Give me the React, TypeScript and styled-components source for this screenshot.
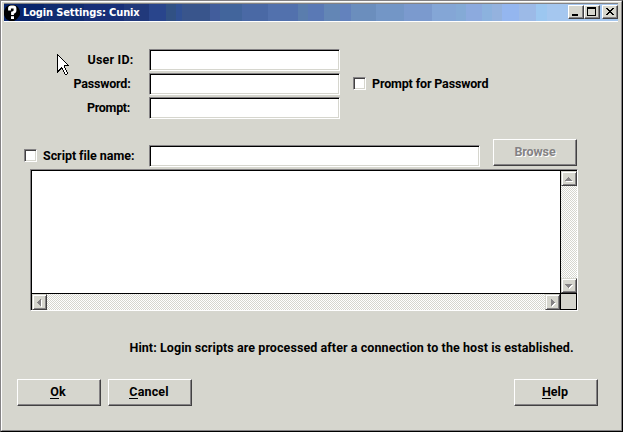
import React from 'react';
import styled, { createGlobalStyle } from 'styled-components';

const FACE = '#d6d6ce';
const SHADE = '#848284';
const DARK = '#424142';

const GlobalStyle = createGlobalStyle`
  * { box-sizing: border-box; }
  body { margin: 0; overflow: hidden; background: ${FACE}; }
`;

const Frame = styled.main`
  width: 623px;
  height: 432px;
  background: ${FACE};
  border: 1px solid ${SHADE};
  border-right-color: #000;
  border-bottom-color: #000;
  font: bold 12.5px/16px Roboto, 'Liberation Sans', sans-serif;
  color: #000;
`;

const Inner = styled.div`
  width: 621px;
  height: 430px;
  border: 1px solid #fff;
  border-right-color: ${SHADE};
  border-bottom-color: ${SHADE};
  padding: 1px 2px;
  display: flex;
  flex-direction: column;
`;

const TitleBar = styled.header`
  height: 19px;
  flex: none;
  display: flex;
  align-items: center;
  margin-right: 1px;
  border-top: 1px solid ${SHADE};
  border-bottom: 1px solid #fff;
  background: linear-gradient(
    90deg,
    #08246b 0 40px, #102c70 40px 80px, #182f78 80px 120px, #21397b 120px 145px,
    #29458c 145px 162px, #315184 162px 172px, #315194 172px 178px, #39558c 178px 206px,
    #425d9c 206px 216px, #42659c 216px 238px, #4a69a5 238px 264px, #5271ad 264px 294px,
    #5a7dad 294px 304px, #5a79b5 304px 320px, #6386b5 320px 336px, #6382bd 336px 347px,
    #6b8ebd 347px 372px, #7396c6 372px 400px, #7b9ace 400px 428px, #84a6d6 428px 452px,
    #84aad6 452px 462px, #8caade 462px 478px, #8cb2de 478px 488px, #94b2de 488px 498px,
    #94b6ef 498px 515px, #9cbae7 515px 532px, #9cc7f0 532px 543px, #a5c7ef 543px
  );
`;

const Title = styled.h1`
  flex: 1;
  margin: 0 0 0 3px;
  color: #fff;
  font: bold 11px/16px 'DejaVu Sans Condensed', 'DejaVu Sans', sans-serif;
  letter-spacing: -0.13px;
`;

const CaptionButton = styled.button<{ $gap?: number }>`
  width: 16px;
  height: 14px;
  padding: 0;
  margin-left: ${p => p.$gap ?? 0}px;
  margin-top: -1px;
  background: ${FACE};
  border: 1px solid #fff;
  border-right-color: ${DARK};
  border-bottom-color: ${DARK};
  box-shadow: inset -1px -1px ${SHADE};
  svg { display: block; }
`;

const Client = styled.form`
  flex: 1;
  display: flex;
  flex-direction: column;
`;

const Credentials = styled.section`
  display: flex;
  height: 70px;
  margin-top: 27px;
`;

const PointerArea = styled.div`
  width: 70px;
  padding: 5px 0 0 53px;
  svg { display: block; }
`;

const FieldList = styled.div`
  display: grid;
  grid-template-columns: 75px 191px;
  grid-auto-rows: 22px;
  row-gap: 2px;
  align-items: center;
`;

const Label = styled.label<{ $shift?: number; $track?: number }>`
  white-space: nowrap;
  margin-left: ${p => p.$shift ?? 0}px;
  letter-spacing: ${p => p.$track ?? 0}px;
`;

const Field = styled.input<{ $width: number }>`
  display: block;
  width: ${p => p.$width}px;
  height: 22px;
  padding: 0 3px;
  font: inherit;
  outline: 0;
  border: 1px solid ${SHADE};
  border-right-color: #fff;
  border-bottom-color: #fff;
  box-shadow: inset 1px 1px #000, inset -1px -1px ${FACE};
  background: #fff;
`;

const Check = styled.input.attrs({ type: 'checkbox' })`
  appearance: none;
  flex: none;
  width: 13px;
  height: 13px;
  margin: 0;
  background: #fff;
  border: 1px solid ${SHADE};
  border-right-color: #fff;
  border-bottom-color: #fff;
  box-shadow: inset 1px 1px ${DARK}, inset -1px -1px ${FACE};
`;

const CheckOption = styled.div`
  display: flex;
  align-items: flex-start;
  height: 22px;
  margin: 24px 0 0 13px;
  ${Check} { margin-top: 4px; }
  ${Label} { margin-top: 3px; }
`;

const ScriptRow = styled.section`
  display: flex;
  align-items: flex-start;
  height: 28px;
  margin: 20px 0 2px 20px;
  ${Check} { margin-top: 10px; }
`;

const ScriptLabel = styled(Label)`
  width: 106px;
  margin-top: 9px;
`;

const ScriptField = styled(Field)`
  margin-top: 6px;
`;

const Button = styled.button<{ $gap?: number; $track?: number }>`
  width: 84px;
  height: 27px;
  flex: none;
  margin-left: ${p => p.$gap ?? 0}px;
  padding: 0 2px 2px 0;
  font: inherit;
  letter-spacing: ${p => p.$track ?? 0}px;
  color: #000;
  background: ${FACE};
  border: 1px solid #fff;
  border-right-color: ${DARK};
  border-bottom-color: ${DARK};
  box-shadow: inset -1px -1px ${SHADE};
  &:disabled { color: ${SHADE}; text-shadow: 1px 1px #fff; padding-right: 0; }
`;

const AccessKey = styled.span`
  border-bottom: 1px solid #000;
  display: inline-block;
  line-height: 13px;
`;

const Editor = styled.section`
  display: grid;
  grid-template-columns: 529px 16px;
  grid-template-rows: 123px 16px;
  width: 548px;
  height: 142px;
  margin-left: 26px;
  border: 1px solid ${SHADE};
  border-right-color: #fff;
  border-bottom-color: #fff;
  padding: 1px 0 0 1px;
  background: linear-gradient(#000, #000) 0 0 / 100% 1px no-repeat,
    linear-gradient(#000, #000) 0 0 / 1px 100% no-repeat, ${FACE};
`;

const Script = styled.textarea`
  width: 529px;
  height: 123px;
  display: block;
  margin: 0;
  padding: 2px;
  resize: none;
  border: 0;
  border-right: 1px solid #000;
  border-bottom: 1px solid #000;
  outline: 0;
  overflow: hidden;
  background: #fff;
`;

const Track = styled.div<{ $vertical?: boolean }>`
  display: flex;
  flex-direction: ${p => (p.$vertical ? 'column' : 'row')};
  justify-content: space-between;
  border-${p => (p.$vertical ? 'bottom' : 'right')}: 1px solid #000;
  background: repeating-conic-gradient(#fff 0 25%, ${FACE} 0 50%) 0 0 / 2px 2px;
`;

const Arrow = styled.button<{ $vertical?: boolean }>`
  width: ${p => (p.$vertical ? 16 : 15)}px;
  height: ${p => (p.$vertical ? 15 : 16)}px;
  flex: none;
  padding: 0;
  background: ${FACE};
  border: 1px solid ${FACE};
  border-right-color: ${DARK};
  border-bottom-color: ${DARK};
  box-shadow: inset 1px 1px #fff, inset -1px -1px ${SHADE};
  svg { display: block; }
`;

const Corner = styled.div`
  border-right: 1px solid #000;
  border-bottom: 1px solid #000;
`;

const Hint = styled.p`
  margin: 29px 0 0 125.5px;
  white-space: nowrap;
  letter-spacing: 0.075px;
`;

const Actions = styled.footer`
  display: flex;
  margin: 23px 21px 0 13px;
`;

const HelpButton = styled(Button)`
  margin-left: auto;
`;

const ARROWS = {
  up: 'M6 5h1v1h1v1h1v1h1v1H3V8h1V7h1V6h1z',
  down: 'M3 5h7v1H9v1H8v1H7v1H6V8H5V7H4V6H3z',
  left: 'M8 3v7H7V9H6V8H5V7H4V6h1V5h1V4h1V3z',
  right: 'M5 3v7h1V9h1V8h1V7h1V6H8V5H7V4H6V3z',
};

function ScrollArrow({ dir }: { dir: keyof typeof ARROWS }) {
  const vertical = dir === 'up' || dir === 'down';
  return (
    <Arrow type="button" aria-label={`Scroll ${dir}`} $vertical={vertical}>
      <svg width="13" height="13" shapeRendering="crispEdges">
        <path d={ARROWS[dir]} fill="#fff" transform="translate(1 1)" />
        <path d={ARROWS[dir]} fill={SHADE} />
      </svg>
    </Arrow>
  );
}

function HelpIcon() {
  return (
    <svg width="16" height="16" viewBox="0 0 16 16">
      <path d="M5 0h6l3 2 2 4v4l-3 4-3 2H6l-4-2-2-4V6l2-4z" fill="#000" />
      <path d="M5.5 5.5V3.2Q5.5 2 7 2h2.3Q11 2 11 3.5v2Q11 7 8.5 7.8V10" fill="none" stroke="#fff" strokeWidth="2.8" />
      <path d="M7 11.2h3V14H7z" fill="#fff" />
    </svg>
  );
}

function Pointer() {
  return (
    <svg width="13" height="21" viewBox="0 0 13 21" shapeRendering="crispEdges">
      <path
        d="M0 0h1v1h1v1h1v1h1v1h1v1h1v1h1v1h1v1h1v1h1v1h1v1h1v1H8v2h1v2h1v2h1v2h-1v1H8v-1H7v-2H6v-2H5v-1H4v1H3v1H2v1H1v1H0z"
        fill="#000"
      />
      <path
        d="M1 2h1v1h1v1h1v1h1v1h1v1h1v1h1v1h1v1h1v1H7v3h1v2h1v2h1v2H8v-2H7v-2H6v-2H5v-1H4v1H3v1H2v1H1z"
        fill="#fff"
      />
    </svg>
  );
}

export default function App() {
  return (
    <>
      <GlobalStyle />
      <Frame>
        <Inner>
          <TitleBar>
            <HelpIcon />
            <Title>Login Settings: Cunix</Title>
            <CaptionButton aria-label="Minimize">
              <svg width="14" height="12" shapeRendering="crispEdges"><path d="M3 8h6v2H3z" /></svg>
            </CaptionButton>
            <CaptionButton aria-label="Maximize">
              <svg width="14" height="12" shapeRendering="crispEdges"><path d="M2 1h9v9H2zM3 3v6h7V3z" fillRule="evenodd" /></svg>
            </CaptionButton>
            <CaptionButton aria-label="Close" $gap={2}>
              <svg width="14" height="12" shapeRendering="crispEdges">
                <path d="M3 2h2v1h1v1h2V3h1V2h2v1h-1v1H9v1H8v1h1v1h1v1h1v1H9V8H8V7H6v1H5v1H3V8h1V7h1V6h1V5H5V4H4V3H3z" />
              </svg>
            </CaptionButton>
          </TitleBar>
          <Client>
            <Credentials>
              <PointerArea><Pointer /></PointerArea>
              <FieldList>
                <Label $shift={13.5} $track={0.2}>User ID:</Label>
                <Field $width={191} aria-label="User ID" />
                <Label $shift={-0.5} $track={-0.2}>Password:</Label>
                <Field $width={191} aria-label="Password" />
                <Label $shift={13} $track={-0.3}>Prompt:</Label>
                <Field $width={191} aria-label="Prompt" />
              </FieldList>
              <CheckOption>
                <Check aria-label="Prompt for Password" />
                <Label $shift={6} $track={-0.15}>Prompt for Password</Label>
              </CheckOption>
            </Credentials>
            <ScriptRow>
              <Check aria-label="Use script file" />
              <ScriptLabel $shift={6} $track={-0.05}>Script file name:</ScriptLabel>
              <ScriptField $width={331} aria-label="Script file name" />
              <Button type="button" disabled $gap={13} $track={-0.1}>Browse</Button>
            </ScriptRow>
            <Editor>
              <Script aria-label="Script" />
              <Track $vertical>
                <ScrollArrow dir="up" />
                <ScrollArrow dir="down" />
              </Track>
              <Track>
                <ScrollArrow dir="left" />
                <ScrollArrow dir="right" />
              </Track>
              <Corner />
            </Editor>
            <Hint>Hint: Login scripts are processed after a connection to the host is established.</Hint>
            <Actions>
              <Button type="button"><AccessKey>O</AccessKey>k</Button>
              <Button type="button" $gap={7} $track={0.15}><AccessKey>C</AccessKey>ancel</Button>
              <HelpButton type="button"><AccessKey>H</AccessKey>elp</HelpButton>
            </Actions>
          </Client>
        </Inner>
      </Frame>
    </>
  );
}
